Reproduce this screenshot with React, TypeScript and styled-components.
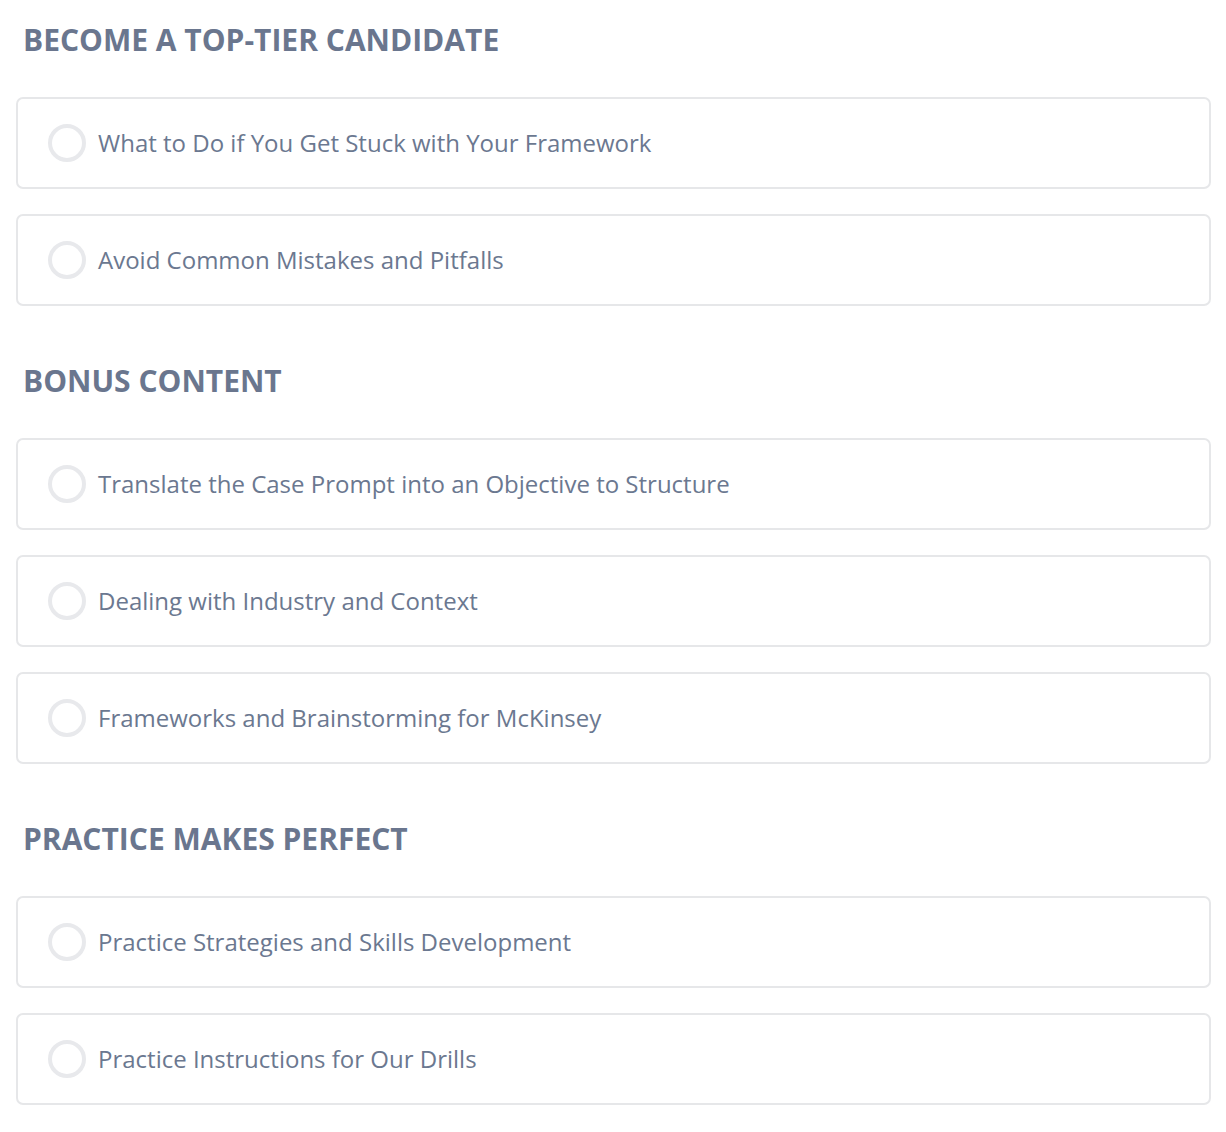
import React from 'react';
import styled, { createGlobalStyle } from 'styled-components';

const GlobalStyle = createGlobalStyle`
  body {
    margin: 0;
    background: #fff;
    font-family: "Open Sans", "Noto Sans", sans-serif;
  }
`;

const Page = styled.div`
  padding: 19px 15px 26px 16px;
`;

const Section = styled.section`
  & + & {
    margin-top: 54px;
  }
`;

const Heading = styled.h2`
  margin: 0 0 36px;
  padding-left: 7px;
  font-size: 30px;
  line-height: 42px;
  font-weight: 700;
  color: #6a768e;
  text-transform: uppercase;
`;

const List = styled.div`
  display: flex;
  flex-direction: column;
  gap: 25px;
`;

const Card = styled.div`
  display: flex;
  align-items: center;
  gap: 12px;
  height: 92px;
  box-sizing: border-box;
  padding: 0 30px;
  border: 2px solid #e6e7e9;
  border-radius: 7px;
  background: #fff;
`;

const Check = styled.span<{ $done?: boolean }>`
  flex: none;
  width: 38px;
  height: 38px;
  box-sizing: border-box;
  border-radius: 50%;
  border: 4px solid ${(p) => (p.$done ? '#3fb37f' : '#e8e9ec')};
`;

const Label = styled.span`
  font-size: 24px;
  line-height: 32px;
  margin-top: -1px;
  color: #6b7890;
`;

const sections = [
  {
    title: 'Become a Top-Tier Candidate',
    items: ['What to Do if You Get Stuck with Your Framework', 'Avoid Common Mistakes and Pitfalls'],
  },
  {
    title: 'Bonus Content',
    items: [
      'Translate the Case Prompt into an Objective to Structure',
      'Dealing with Industry and Context',
      'Frameworks and Brainstorming for McKinsey',
    ],
  },
  {
    title: 'Practice Makes Perfect',
    items: ['Practice Strategies and Skills Development', 'Practice Instructions for Our Drills'],
  },
];

const App: React.FC = () => {
  return (
    <Page>
      <GlobalStyle />
      {sections.map((s) => (
        <Section key={s.title}>
          <Heading>{s.title}</Heading>
          <List>
            {s.items.map((item) => (
              <Card key={item}>
                <Check />
                <Label>{item}</Label>
              </Card>
            ))}
          </List>
        </Section>
      ))}
    </Page>
  );
};

export default App;
